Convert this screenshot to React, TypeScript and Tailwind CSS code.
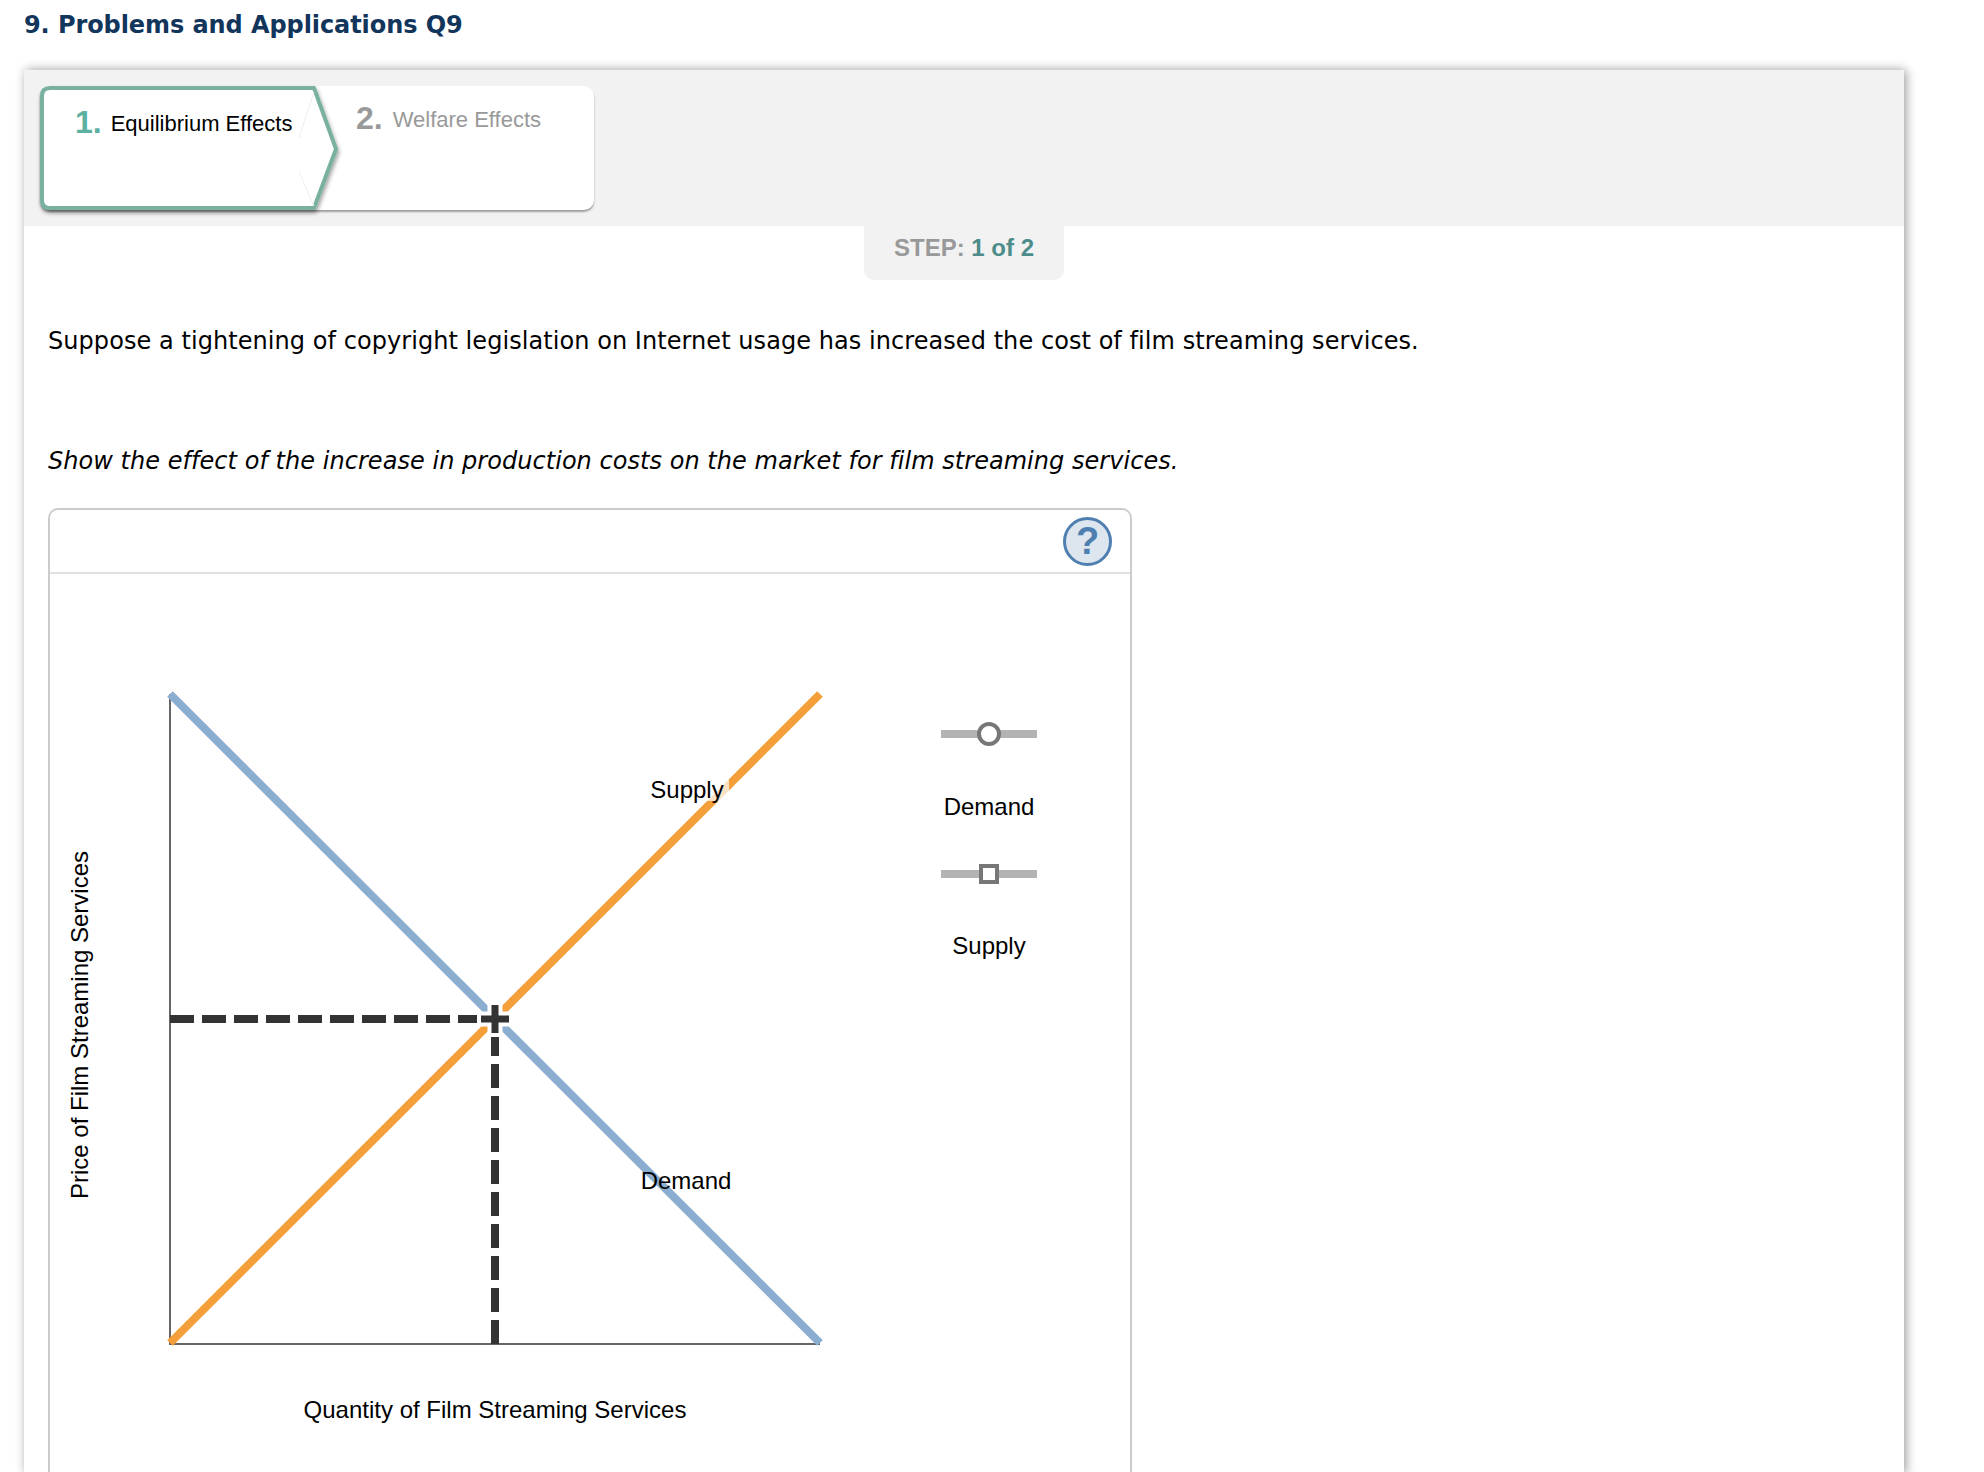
import React from 'react';

const arial = "font-['Liberation_Sans',Arial,sans-serif]";

const TabStrip = () => (
  <div className="relative h-[124px] w-[554px] rounded-[10px] bg-white shadow-[0_2px_2px_rgba(0,0,0,0.35)]">
    <svg className="absolute left-0 top-0 overflow-visible" width="300" height="124" viewBox="0 0 300 124">
      <defs>
        <filter id="tabShadow" x="-5%" y="-5%" width="115%" height="120%">
          <feDropShadow dx="1" dy="3" stdDeviation="2" floodColor="#000" floodOpacity="0.4" />
        </filter>
      </defs>
      <path
        d="M10 2 H274 L296 63 L274 122 H10 Q2 122 2 114 V10 Q2 2 10 2 Z"
        fill="#fff"
        stroke="#7ab0a0"
        strokeWidth="4"
        strokeLinejoin="round"
        filter="url(#tabShadow)"
      />
      <path d="M274 6 L259 52 M259 86 L274 120" stroke="#eeeeee" strokeWidth="1" fill="none" />
    </svg>
    <div className={`${arial} absolute left-[35px] top-[16px] flex items-baseline gap-[9px]`}>
      <span className="text-[32px] leading-[40px] font-bold text-[#5bb0a2]">1.</span>
      <span className="-translate-y-[2px] text-[22px] text-black">Equilibrium Effects</span>
    </div>
    <div className={`${arial} absolute left-[316px] top-[12px] flex items-baseline gap-[10px]`}>
      <span className="text-[32px] leading-[40px] font-bold text-[#999999]">2.</span>
      <span className="-translate-y-[2px] text-[22px] text-[#999999]">Welfare Effects</span>
    </div>
  </div>
);

const StepBadge = () => (
  <div className="flex justify-center">
    <div className={`${arial} flex h-[54px] w-[200px] items-start justify-center rounded-b-[10px] bg-[#f2f2f2] pt-[4px] text-[24px] font-bold text-[#999999]`}>
      STEP:&nbsp;<span className="text-[#4d8c8a]">1 of 2</span>
    </div>
  </div>
);

const Plot = () => (
  <svg width="891" height="900" viewBox="50 574 891 900" className="shrink-0">
    <path d="M170 694 V1344 H820" fill="none" stroke="#666666" strokeWidth="2" />
    <line x1="170" y1="694" x2="820" y2="1343" stroke="#8badd0" strokeWidth="8" />
    <line x1="170" y1="1343" x2="820" y2="694" stroke="#f59f3a" strokeWidth="8" />
    <path d="M170 1019 H477" stroke="#333333" strokeWidth="8" strokeDasharray="24 8" fill="none" />
    <path d="M495 1344 V1037" stroke="#333333" strokeWidth="8" strokeDasharray="24 8" fill="none" />
    <path d="M477 1019 H513 M495 1001 V1037" stroke="#fff" strokeWidth="15" fill="none" />
    <path d="M481 1019 H509 M495 1005 V1033" stroke="#333333" strokeWidth="7" fill="none" />
    <rect x="648" y="779" width="81" height="22" fill="#fff" fillOpacity="0.7" />
    <g className={arial} fontSize="24" fill="#000">
      <text x="687" y="798" textAnchor="middle">Supply</text>
      <text x="686" y="1189" textAnchor="middle">Demand</text>
      <text x="495" y="1418" textAnchor="middle">Quantity of Film Streaming Services</text>
      <text transform="translate(88 1025) rotate(-90)" textAnchor="middle">Price of Film Streaming Services</text>
    </g>
  </svg>
);

const Legend = () => (
  <div className={`${arial} w-[96px] shrink-0 pt-[148px] text-center text-[24px] text-black`}>
    <svg width="96" height="24" viewBox="0 0 96 24" className="block">
      <rect x="0" y="8" width="96" height="8" fill="#b3b3b3" />
      <circle cx="48" cy="12" r="10" fill="#fff" stroke="#777777" strokeWidth="4" />
    </svg>
    <div className="mt-[47px] flex h-[28px] items-center justify-center whitespace-nowrap">Demand</div>
    <svg width="96" height="24" viewBox="0 0 96 24" className="mt-[41px] block">
      <rect x="0" y="8" width="96" height="8" fill="#b3b3b3" />
      <rect x="40" y="4" width="16" height="16" fill="#fff" stroke="#777777" strokeWidth="4" />
    </svg>
    <div className="mt-[46px] flex h-[28px] items-center justify-center whitespace-nowrap">Supply</div>
  </div>
);

const GraphBox = () => (
  <div className="mt-[31px] ml-[-1px] w-[1084px] rounded-t-[10px] border-2 border-b-0 border-[#cccccc]">
    <div className="flex h-[64px] items-center justify-end border-b-2 border-[#e0e0e0] pr-[18px]">
      <div className={`${arial} flex h-[49px] w-[49px] items-center justify-center rounded-full border-[3px] border-[#4f7fb0] bg-[#dde6ef] text-[38px] font-bold text-[#4f7fb0]`}>?</div>
    </div>
    <div className="flex">
      <Plot />
      <Legend />
    </div>
  </div>
);

export default function App() {
  return (
    <div className="h-[1472px] overflow-hidden bg-white">
      <h1 className="h-[70px] pl-[24px] pt-[10px] font-['DejaVu_Sans',Verdana,sans-serif] text-[24px] font-bold leading-[30px] tracking-[-0.08px] text-[#12355b]">
        9. Problems and Applications Q9
      </h1>
      <div className="ml-[24px] w-[1880px] bg-white shadow-[2px_0_10px_rgba(0,0,0,0.4)]">
        <div className="h-[156px] bg-[#f2f2f2] pl-[16px] pt-[16px]">
          <TabStrip />
        </div>
        <StepBadge />
        <div className="px-[24px] font-['DejaVu_Sans',Verdana,sans-serif] text-[24px] leading-[32px] text-black">
          <p className="mt-[45px] tracking-[0.06px]">Suppose a tightening of copyright legislation on Internet usage has increased the cost of film streaming services.</p>
          <p className="mt-[88px] italic tracking-[0.04px]">Show the effect of the increase in production costs on the market for film streaming services.</p>
        </div>
        <div className="pl-[25px]">
          <GraphBox />
        </div>
      </div>
    </div>
  );
}
